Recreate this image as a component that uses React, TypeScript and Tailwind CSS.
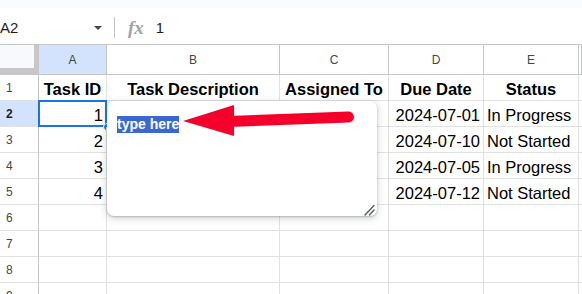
import React from "react";

const GRID = "grid grid-cols-[39px_68px_173px_109px_95px_95px_1fr]";

type Row = {
  n: number;
  a?: string;
  b?: string;
  c?: string;
  d?: string;
  e?: string;
  header?: boolean;
};

const rows: Row[] = [
  { n: 1, a: "Task ID", b: "Task Description", c: "Assigned To", d: "Due Date", e: "Status", header: true },
  { n: 2, a: "1", d: "2024-07-01", e: "In Progress" },
  { n: 3, a: "2", d: "2024-07-10", e: "Not Started" },
  { n: 4, a: "3", d: "2024-07-05", e: "In Progress" },
  { n: 5, a: "4", d: "2024-07-12", e: "Not Started" },
  { n: 6 },
  { n: 7 },
  { n: 8 },
  { n: 9 },
];

function Cell({
  children,
  align = "left",
  bold = false,
}: {
  children?: React.ReactNode;
  align?: "left" | "right" | "center";
  bold?: boolean;
}) {
  const al =
    align === "right" ? "justify-end pr-[3px]" : align === "center" ? "justify-center" : "justify-start pl-[3px]";
  return (
    <div
      className={`relative flex items-end pb-[1px] border-r border-b border-[#e1e1e1] overflow-visible whitespace-nowrap text-[16.5px] leading-[19px] text-black ${al} ${
        bold ? "font-bold" : ""
      }`}
    >
      {children}
    </div>
  );
}

export default function App() {
  return (
    <div
      className="relative w-[582px] h-[294px] overflow-hidden bg-white"
      style={{ fontFamily: '"Liberation Sans", Arial, sans-serif' }}
    >
      {/* top band */}
      <div className="h-[8px] bg-[#f9fbfd]" />

      {/* formula bar */}
      <div className="flex h-[37px] items-center border-b border-[#c4c7c5] pt-[3px] text-[#1f1f1f]">
        <div className="flex w-[114px] items-center">
          <span className="text-[15px] leading-[17px]">A2</span>
          <svg width="8" height="4" viewBox="0 0 8 4" className="ml-[76px]">
            <path d="M0 0 L8 0 L4 4 Z" fill="#444746" />
          </svg>
        </div>
        <div className="h-[21px] w-px bg-[#c4c7c5]" />
        <span
          className="ml-[13px] text-[19px] font-bold italic leading-[17px] text-[#a3a3a3]"
          style={{ fontFamily: '"Liberation Serif", "Times New Roman", serif' }}
        >
          fx
        </span>
        <span className="ml-[12px] text-[15px] leading-[17px]">1</span>
      </div>

      {/* column headers */}
      <div className={`${GRID} h-[30px]`}>
        <div className="border-r border-b border-[#c4c7c5] bg-[#c7c7c7]">
          <div className="h-[23px] w-[34px] bg-[#f8f9fd]" />
        </div>
        {["A", "B", "C", "D", "E", ""].map((l, i) => (
          <div
            key={i}
            className={`flex items-center justify-center border-r border-b border-[#c4c7c5] text-[12px] text-[#444746] ${
              i === 0 ? "bg-[#d3e3fd] text-[#1f1f1f]" : "bg-white"
            }`}
          >
            {l}
          </div>
        ))}
      </div>

      {/* rows */}
      {rows.map((r) => (
        <div key={r.n} className={`${GRID} h-[26px]`}>
          <div
            className={`flex items-center pl-[6px] border-r border-[#c4c7c5] border-b border-b-[#e1e1e1] text-[12px] ${
              r.n === 2 ? "bg-[#d3e3fd] font-bold text-[#1f1f1f]" : "text-[#444746]"
            }`}
          >
            {r.n}
          </div>
          <Cell align={r.header ? "center" : "right"} bold={r.header}>
            {r.a}
            {r.n === 2 && (
              <>
                <div className="absolute -left-px -top-px -right-px -bottom-px border-2 border-[#1a73e8]" />
                <div className="absolute -right-[5px] -bottom-[5px] h-[8px] w-[8px] rounded-full border border-white bg-[#1a73e8]" />
              </>
            )}
          </Cell>
          <Cell align="center" bold={r.header}>
            {r.b}
          </Cell>
          <Cell align="center" bold={r.header}>
            {r.c}
          </Cell>
          <Cell align={r.header ? "center" : "right"} bold={r.header}>
            {r.d}
          </Cell>
          <Cell align={r.header ? "center" : "left"} bold={r.header}>
            {r.e}
          </Cell>
          <Cell />
        </div>
      ))}

      {/* in-cell editor popup */}
      <div className="absolute left-[107px] top-[101px] h-[115px] w-[270px] rounded-[7px] bg-white shadow-[0_2px_6px_2px_rgba(60,64,67,0.15),0_1px_2px_rgba(60,64,67,0.3)]">
        <div className="pl-[10px] pt-[11px]">
          <span className="bg-[#3b68d0] text-[14px] font-bold leading-[17px] text-white inline-block">
            type here
          </span>
        </div>
        <svg className="absolute left-[256px] top-[102px]" width="14" height="13" viewBox="0 0 14 13">
          <path d="M2 12 L11 2.5 M6.5 12 L11 7" stroke="#5f6368" strokeWidth="1.5" strokeLinecap="round" />
        </svg>
      </div>

      {/* red arrow annotation */}
      <svg className="pointer-events-none absolute left-0 top-0" width="582" height="294" viewBox="0 0 582 294">
        <line x1="228" y1="121.5" x2="348.5" y2="117" stroke="#f5002a" strokeWidth="11" strokeLinecap="round" />
        <polygon points="183,121 234,105 234,136" fill="#f5002a" />
      </svg>
    </div>
  );
}
